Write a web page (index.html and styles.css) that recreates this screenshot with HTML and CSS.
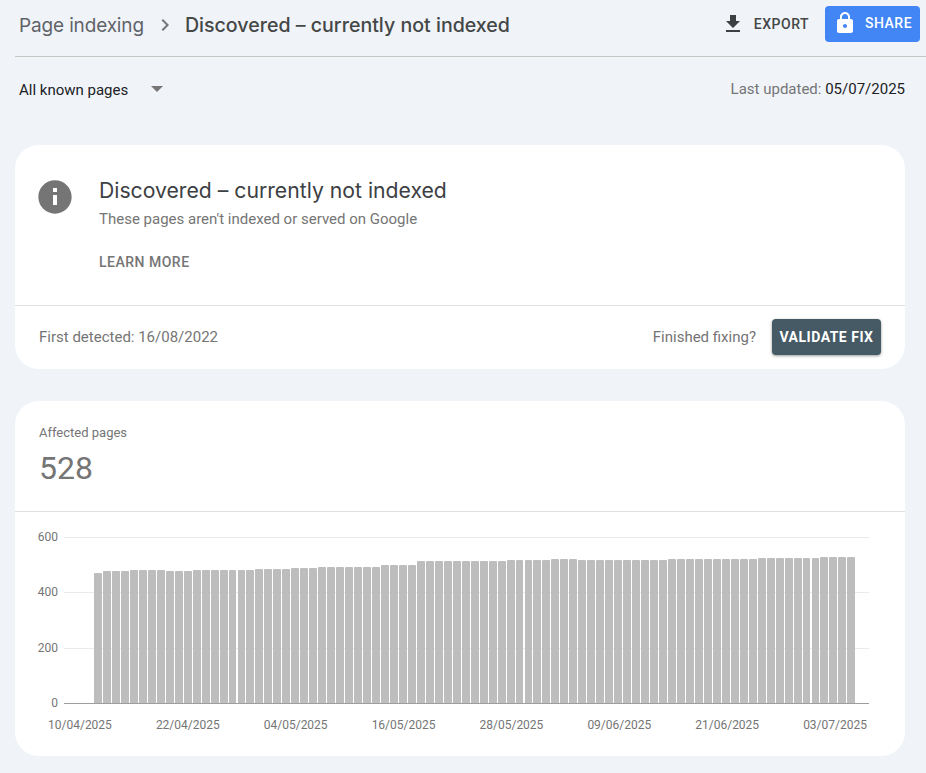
FILE: index.html
```html
<!DOCTYPE html>
<html lang="en">
<head>
<meta charset="utf-8">
<title>Page indexing</title>
<link rel="stylesheet" href="styles.css">
</head>
<body>
<header class="topbar">
  <nav class="crumbs">
    <span class="crumb">Page indexing</span>
    <svg class="chevron" viewBox="0 0 24 24"><path d="M10 6 8.59 7.41 13.17 12l-4.58 4.59L10 18l6-6z"/></svg>
    <span class="crumb crumb-current">Discovered – currently not indexed</span>
  </nav>
  <div class="actions">
    <button class="export">
      <svg class="icon" viewBox="0 0 24 24"><path d="M19 9h-4V3H9v6H5l7 7 7-7zM5 18v2h14v-2H5z"/></svg>
      <span>EXPORT</span>
    </button>
    <button class="share">
      <svg class="icon" viewBox="0 0 24 24"><path d="M18 8h-1V6c0-2.76-2.24-5-5-5S7 3.24 7 6v2H6c-1.1 0-2 .9-2 2v10c0 1.1.9 2 2 2h12c1.1 0 2-.9 2-2V10c0-1.1-.9-2-2-2zm-6 9c-1.1 0-2-.9-2-2s.9-2 2-2 2 .9 2 2-.9 2-2 2zm3.1-9H8.9V6c0-1.71 1.39-3.1 3.1-3.1 1.71 0 3.1 1.39 3.1 3.1v2z"/></svg>
      <span>SHARE</span>
    </button>
  </div>
</header>

<div class="filterbar">
  <div class="filter"><span class="filter-label">All known pages</span><i class="caret"></i></div>
  <div class="updated">Last updated: <b>05/07/2025</b></div>
</div>

<main class="content">
  <section class="card">
    <div class="summary">
      <svg class="info" viewBox="0 0 24 24"><path d="M12 2C6.48 2 2 6.48 2 12s4.48 10 10 10 10-4.48 10-10S17.52 2 12 2zm1.2 14.8h-2.4v-6h2.4v6zm0-7.8h-2.4V6.6h2.4V9z"/></svg>
      <div class="summary-text">
        <h1>Discovered – currently not indexed</h1>
        <p>These pages aren't indexed or served on Google</p>
        <a class="learn">LEARN MORE</a>
      </div>
    </div>
    <div class="card-foot">
      <span>First detected: 16/08/2022</span>
      <div class="fix">
        <span>Finished fixing?</span>
        <button class="validate">VALIDATE FIX</button>
      </div>
    </div>
  </section>

  <section class="card">
    <div class="metric">
      <div class="metric-label">Affected pages</div>
      <div class="metric-value">528</div>
    </div>
    <div class="chart">
      <div class="chart-main">
        <div class="y-axis"><span>600</span><span>400</span><span>200</span><span>0</span></div>
        <div class="plot">
          <div class="grid"><i></i><i></i><i></i></div>
          <div class="bars">
            <i style="height:130px"></i>
            <i style="height:132px"></i><i style="height:132px"></i><i style="height:132px"></i>
            <i style="height:133px"></i><i style="height:133px"></i><i style="height:133px"></i><i style="height:133px"></i>
            <i style="height:132px"></i><i style="height:132px"></i><i style="height:132px"></i>
            <i style="height:133px"></i><i style="height:133px"></i><i style="height:133px"></i><i style="height:133px"></i><i style="height:133px"></i><i style="height:133px"></i><i style="height:133px"></i>
            <i style="height:134px"></i><i style="height:134px"></i><i style="height:134px"></i><i style="height:134px"></i>
            <i style="height:135px"></i><i style="height:135px"></i><i style="height:135px"></i>
            <i style="height:136px"></i><i style="height:136px"></i><i style="height:136px"></i><i style="height:136px"></i><i style="height:136px"></i><i style="height:136px"></i><i style="height:136px"></i>
            <i style="height:138px"></i><i style="height:138px"></i><i style="height:138px"></i><i style="height:138px"></i>
            <i style="height:142px"></i><i style="height:142px"></i><i style="height:142px"></i><i style="height:142px"></i><i style="height:142px"></i><i style="height:142px"></i><i style="height:142px"></i><i style="height:142px"></i><i style="height:142px"></i><i style="height:142px"></i>
            <i style="height:143px"></i><i style="height:143px"></i><i style="height:143px"></i><i style="height:143px"></i><i style="height:143px"></i>
            <i style="height:144px"></i><i style="height:144px"></i><i style="height:144px"></i>
            <i style="height:143px"></i><i style="height:143px"></i><i style="height:143px"></i><i style="height:143px"></i><i style="height:143px"></i><i style="height:143px"></i><i style="height:143px"></i><i style="height:143px"></i><i style="height:143px"></i><i style="height:143px"></i>
            <i style="height:144px"></i><i style="height:144px"></i><i style="height:144px"></i><i style="height:144px"></i><i style="height:144px"></i><i style="height:144px"></i><i style="height:144px"></i><i style="height:144px"></i><i style="height:144px"></i><i style="height:144px"></i>
            <i style="height:145px"></i><i style="height:145px"></i><i style="height:145px"></i><i style="height:145px"></i><i style="height:145px"></i><i style="height:145px"></i><i style="height:145px"></i>
            <i style="height:146px"></i><i style="height:146px"></i><i style="height:146px"></i><i style="height:146px"></i>
          </div>
        </div>
      </div>
      <div class="x-axis">
        <span>10/04/2025</span><span>22/04/2025</span><span>04/05/2025</span><span>16/05/2025</span><span>28/05/2025</span><span>09/06/2025</span><span>21/06/2025</span><span>03/07/2025</span>
      </div>
    </div>
  </section>
</main>
</body>
</html>
```

FILE: styles.css
```css
* { box-sizing: border-box; }
html, body { margin: 0; height: 100%; }
body {
  background: #f0f4f9;
  font-family: Roboto, "Liberation Sans", sans-serif;
  color: #757575;
  overflow: hidden;
}
button { font-family: inherit; border: 0; background: none; padding: 0; }

.topbar {
  height: 57px;
  margin-left: 15px;
  padding: 6px 6px 0 4px;
  border-bottom: 1px solid #c4c7c5;
  display: flex;
  justify-content: space-between;
  align-items: flex-start;
}
.crumbs { display: flex; align-items: center; height: 38px; }
.crumb { font-family: Inter, Roboto, sans-serif; font-size: 19px; letter-spacing: -.15px; color: #5f6368; }
.crumb-current { color: #444746; font-weight: 500; font-size: 19.6px; letter-spacing: 0; }
.chevron { width: 24px; height: 24px; margin: 0 8px 0 9px; fill: #757575; }
.actions { display: flex; align-items: flex-start; gap: 17px; }
.icon { width: 24px; height: 24px; display: block; }
.export {
  display: flex;
  align-items: center;
  height: 36px;
  gap: 9px;
  padding-left: 1px;
  color: #444746;
  font-size: 14px;
  font-weight: 500;
  letter-spacing: .5px;
}
.export span { margin-right: -1px; }
.export .icon { fill: #3c4043; }
.share {
  display: flex;
  align-items: center;
  width: 95px;
  height: 36px;
  padding: 0 0 2px 8px;
  gap: 8px;
  border-radius: 4px;
  background: #4285f4;
  color: #fff;
  font-size: 14px;
  font-weight: 500;
  letter-spacing: .5px;
}
.share .icon { fill: #fff; }

.filterbar {
  display: flex;
  justify-content: space-between;
  align-items: center;
  height: 64px;
  padding: 0 21px 0 19px;
}
.filter { display: flex; align-items: center; gap: 23px; color: #202124; font-size: 15px; }
.filter-label { padding-top: 2px; }
.caret {
  width: 0; height: 0;
  border-left: 6px solid transparent;
  border-right: 6px solid transparent;
  border-top: 6px solid #757575;
}
.updated { font-size: 15px; }
.updated b { font-weight: 400; color: #202124; }

.content {
  margin: 24px 21px 0 15px;
  display: flex;
  flex-direction: column;
  gap: 32px;
}
.card { background: #fff; border-radius: 24px; overflow: hidden; }

.summary {
  height: 161px;
  display: flex;
  padding: 32px 0 0 20px;
  border-bottom: 1px solid #e0e0e0;
}
.info { width: 40px; height: 40px; fill: #757575; flex: none; }
.summary-text { margin-left: 24px; }
.summary-text h1 {
  margin: -1px 0 0;
  font-family: Inter, Roboto, sans-serif;
  font-size: 21.2px;
  line-height: 28px;
  font-weight: 400;
  color: #3c4043;
}
.summary-text p { margin: 5px 0 0; font-size: 15px; line-height: 20px; color: #757575; }
.learn {
  display: block;
  margin-top: 23px;
  font-size: 14px;
  line-height: 20px;
  font-weight: 500;
  letter-spacing: .5px;
  color: #757575;
}
.card-foot {
  height: 63px;
  display: flex;
  justify-content: space-between;
  align-items: center;
  padding: 0 24px 1px;
  font-size: 15px;
}
.fix { display: flex; align-items: center; gap: 16px; }
.validate {
  width: 109px;
  height: 36px;
  border-radius: 4px;
  background: #455a64;
  color: #fff;
  font-size: 14px;
  font-weight: 700;
  letter-spacing: .5px;
  box-shadow: 0 1px 3px rgba(0,0,0,.4);
}

.metric { height: 111px; padding: 24px 24px 0; border-bottom: 1px solid #e0e0e0; }
.metric-label { font-size: 13px; line-height: 16px; color: #757575; }
.metric-value { font-size: 32px; line-height: 40px; margin-top: 7px; color: #757575; }

.chart { padding: 25px 36px 0 23px; height: 244px; font-size: 12px; }
.chart-main { display: flex; height: 167px; }
.y-axis {
  width: 20px;
  height: 180px;
  margin-top: -7px;
  flex: none;
  display: flex;
  flex-direction: column;
  justify-content: space-between;
  align-items: flex-end;
  line-height: 14px;
  color: #757575;
}
.plot {
  margin-left: 6px;
  width: 805px;
  height: 167px;
  flex: none;
  display: grid;
  border-bottom: 1px solid #9e9e9e;
}
.grid, .bars { grid-area: 1 / 1; }
.grid { display: grid; grid-template-rows: repeat(3, 1fr); }
.grid i { border-top: 1px solid #ebebeb; }
.bars {
  display: flex;
  align-items: flex-end;
  gap: 1.02px;
  padding-left: 30px;
}
.bars i { width: 7.96px; flex: none; background: #bdbdbd; border-radius: 1px 1px 0 0; }
.x-axis {
  display: flex;
  justify-content: space-between;
  margin: 13px 2px 0 10px;
  line-height: 16px;
  color: #757575;
}
```
